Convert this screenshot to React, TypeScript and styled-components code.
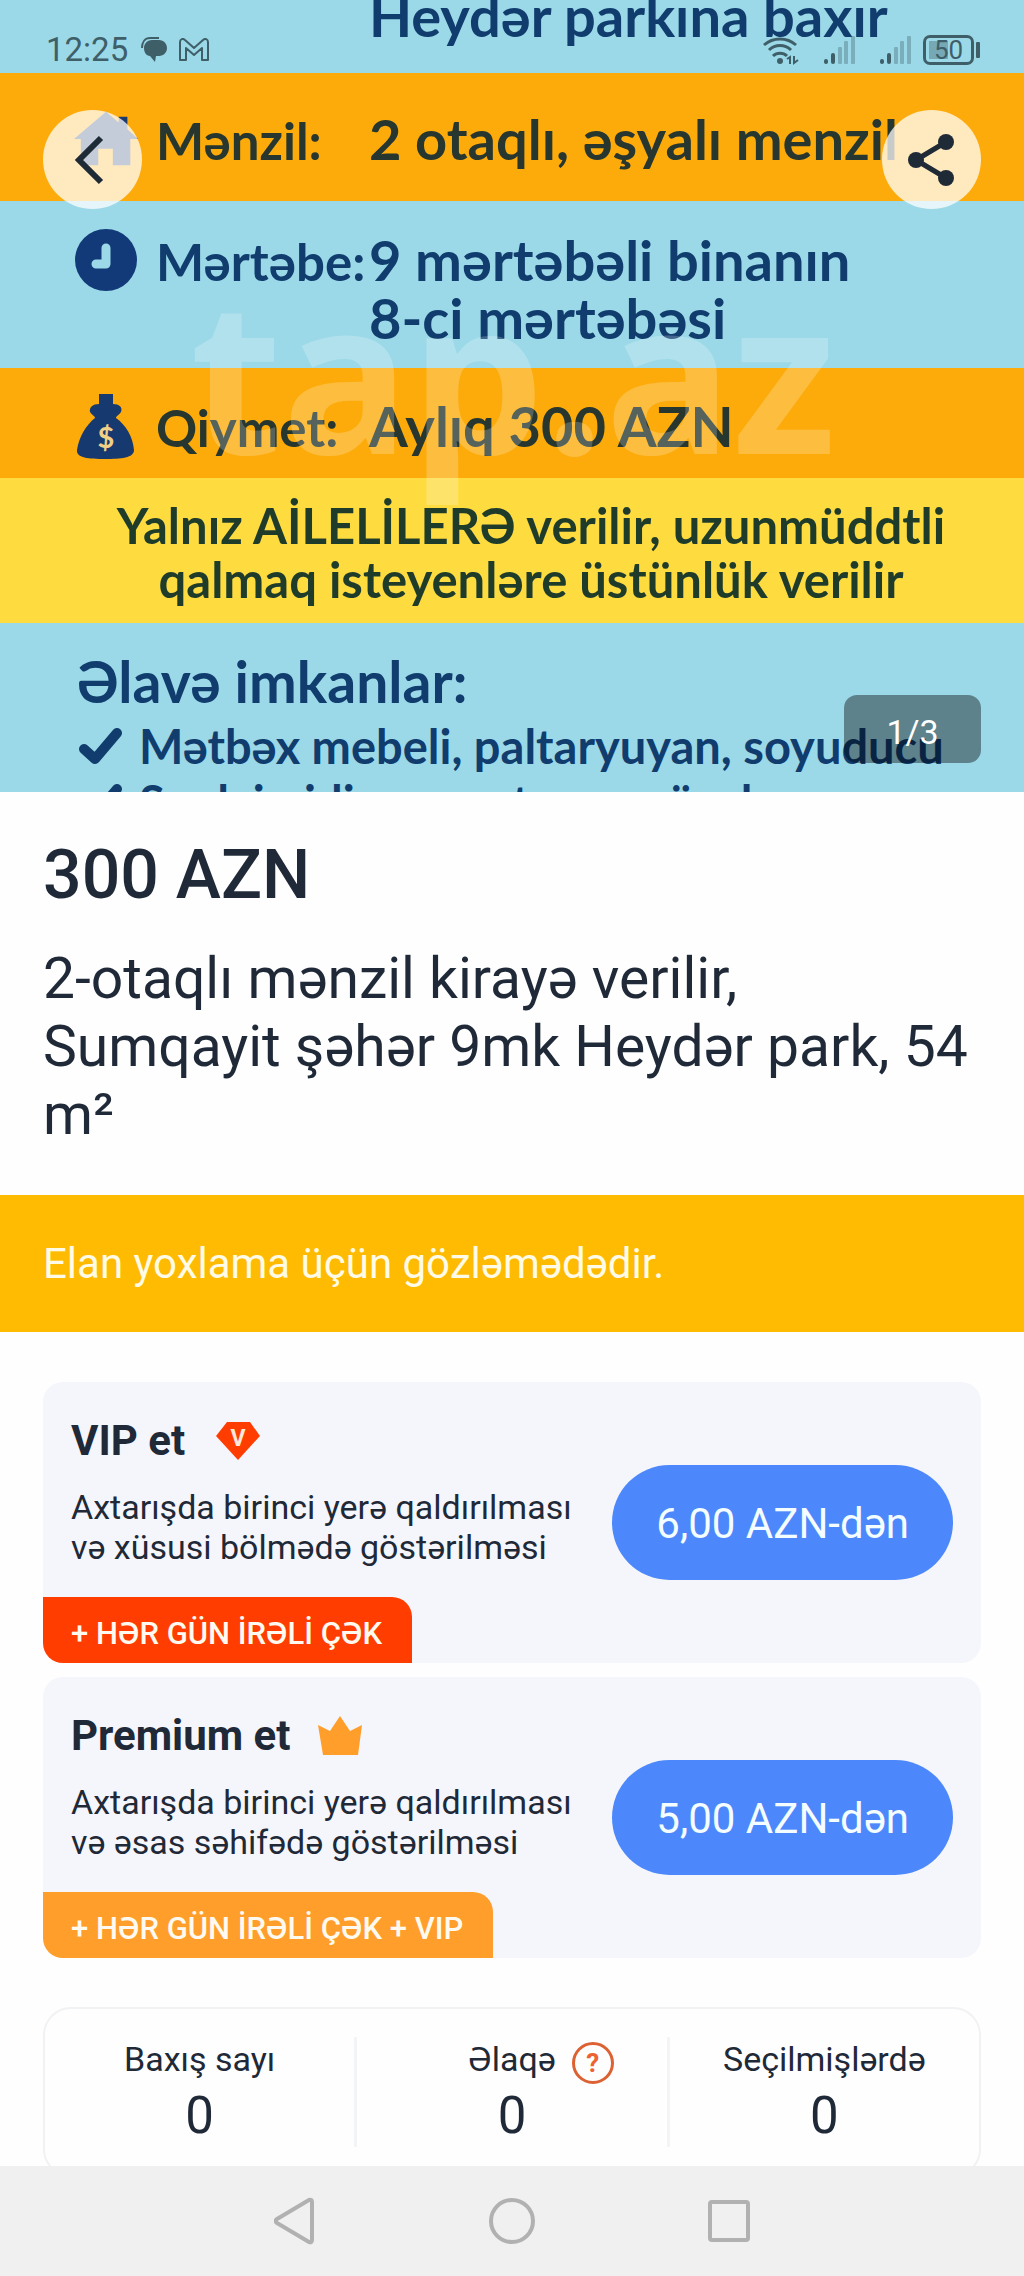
import React from "react";
import styled, { createGlobalStyle } from "styled-components";

const ink = "#1f2937";
const statusInk = "#3f5f68";
const navy = "#103d6e";

const GlobalStyle = createGlobalStyle`
  *, *::before, *::after { box-sizing: border-box; }
  body { margin: 0; background: #fefefe; color: ${ink}; font-family: Roboto, sans-serif; }
  h1, h2, p, dl, dt, dd, ul { margin: 0; padding: 0; }
  button { border: 0; padding: 0; font: inherit; color: inherit; background: none; cursor: pointer; }
`;

const Screen = styled.div`
  display: flex;
  flex-direction: column;
  height: 100vh;
`;

const Content = styled.main`
  flex: 1;
  min-height: 0;
  overflow-y: auto;
  scrollbar-width: none;
`;

/* ---------- hero photo ---------- */

const Hero = styled.section`
  position: relative;
  height: 792px;
  overflow: hidden;
`;

const Poster = styled.div`
  display: flex;
  flex-direction: column;
  font-family: Lato, "Open Sans", sans-serif;
  font-weight: 700;
  font-size: 56px;
  line-height: 58px;
  white-space: nowrap;
`;

const tones = {
  sky: { back: "#9bd9e8", text: navy },
  orange: { back: "#fdab0a", text: "#27372f" },
  yellow: { back: "#fedc40", text: "#1f3c2b" },
};

const Band = styled.div<{ $tone: keyof typeof tones; $pad: string }>`
  display: grid;
  grid-template-columns: 82px 213px 1fr;
  align-items: start;
  padding: ${(p) => p.$pad};
  background: ${(p) => tones[p.$tone].back};
  color: ${(p) => tones[p.$tone].text};
`;

const TopBand = styled.div`
  display: flex;
  align-items: flex-end;
  height: 73px;
  padding: 0 0 28px 369px;
  background: ${tones.sky.back};
  color: ${tones.sky.text};
`;

const IconBox = styled.span`
  display: flex;
  align-items: center;
  width: 66px;
  height: 64px;
`;

const BandLabel = styled.span`
  font-size: 51px;
  line-height: 68px;
`;

const BandValue = styled.span`
  line-height: 58px;
  padding-top: 3px;
`;

const Notice = styled.p`
  padding: 20px 0 17px 38px;
  text-align: center;
  font-size: 49px;
  line-height: 54px;
  background: ${tones.yellow.back};
  color: ${tones.yellow.text};
`;

const Extras = styled.div`
  padding: 25px 0 24px 77px;
  background: ${tones.sky.back};
  color: ${tones.sky.text};
`;

const ExtrasTitle = styled.p`
  font-size: 57px;
  line-height: 66px;
`;

const ExtrasList = styled.ul`
  list-style: none;
  padding-top: 4px;
  font-size: 47px;
  line-height: 56px;
`;

const ExtrasItem = styled.li`
  display: flex;
  align-items: center;
  gap: 14px;
`;

const Watermark = styled.span`
  position: absolute;
  left: 190px;
  top: 266px;
  font: 700 212px/212px "Open Sans", sans-serif;
  color: rgba(255, 255, 255, 0.22);
  pointer-events: none;
`;

const StatusBar = styled.div`
  position: absolute;
  inset: 0 0 auto 0;
  display: flex;
  align-items: center;
  padding: 31px 44px 0 46px;
  color: ${statusInk};
  font-size: 33px;
  line-height: 38px;
`;

const StatusIcons = styled.div`
  display: flex;
  align-items: center;
  gap: 12px;
  margin-left: 13px;
`;

const StatusRight = styled(StatusIcons)`
  gap: 25px;
  margin-left: auto;
`;

const SignalPair = styled.div`
  display: flex;
  align-items: center;
  gap: 12px;
`;

const Battery = styled.span`
  display: flex;
  align-items: center;
  gap: 2px;
`;

const BatteryBody = styled.span`
  display: flex;
  align-items: center;
  justify-content: center;
  width: 51px;
  height: 30px;
  border: 3px solid ${statusInk};
  border-radius: 7px;
  font-size: 26px;
  line-height: 24px;
  background: linear-gradient(rgba(63, 95, 104, 0.4), rgba(63, 95, 104, 0.4)) 3px center / 19px 18px no-repeat;
`;

const BatteryTip = styled.span`
  width: 4px;
  height: 16px;
  border-radius: 1px;
  background: ${statusInk};
`;

const HeroActions = styled.div`
  position: absolute;
  inset: 110px 43px auto 43px;
  display: flex;
  justify-content: space-between;
`;

const RoundButton = styled.button`
  display: flex;
  align-items: center;
  justify-content: center;
  width: 99px;
  height: 99px;
  border-radius: 50%;
  background: rgba(255, 255, 255, 0.74);
`;

const PhotoCounter = styled.span`
  position: absolute;
  right: 43px;
  bottom: 29px;
  padding: 17px 42px 11px;
  min-width: 137px;
  border-radius: 13px;
  background: rgba(0, 0, 0, 0.4);
  color: #fff;
  font-size: 34px;
  line-height: 40px;
  text-align: center;
`;

/* ---------- listing ---------- */

const Summary = styled.section`
  padding: 43px 43px 46px;
`;

const Price = styled.p`
  font-size: 68px;
  line-height: 80px;
  font-weight: 500;
`;

const Title = styled.h1`
  margin-top: 30px;
  font-size: 57px;
  line-height: 68px;
  font-weight: 400;
`;

const ReviewBanner = styled.p`
  padding: 43px;
  background: #ffba02;
  color: #fffbe6;
  font-size: 42px;
  line-height: 51px;
`;

const Promotions = styled.section`
  display: flex;
  flex-direction: column;
  gap: 14px;
  padding: 50px 43px 0;
`;

const PromoCard = styled.article`
  display: flex;
  align-items: center;
  gap: 28px;
  padding-right: 28px;
  border-radius: 20px;
  overflow: hidden;
  background: #f5f6fb;
`;

const PromoBody = styled.div`
  flex: 1;
  padding-top: 33px;
`;

const PromoTitle = styled.h2`
  display: flex;
  align-items: center;
  gap: 28px;
  padding-left: 28px;
  font-size: 42px;
  line-height: 52px;
  font-weight: 700;
`;

const PromoText = styled.p`
  margin: 20px 0 30px;
  padding-left: 28px;
  font-size: 34px;
  line-height: 40px;
`;

const Ribbon = styled.p<{ $color: string }>`
  width: fit-content;
  padding: 16px 30px 8px 28px;
  border-top-right-radius: 20px;
  background: ${(p) => p.$color};
  color: #fffaf0;
  font-size: 31px;
  line-height: 42px;
  font-weight: 500;
`;

const PriceButton = styled.button`
  height: 115px;
  padding: 2px 44px 0;
  border-radius: 58px;
  background: #4c88fb;
  color: #f4fdff;
  font-size: 42px;
  line-height: 51px;
  white-space: nowrap;
`;

const Stats = styled.dl`
  display: flex;
  margin: 49px 43px 0;
  padding: 28px 0;
  border: 2px solid #f1f2f4;
  border-radius: 28px;
`;

const Stat = styled.div`
  flex: 1;
  display: flex;
  flex-direction: column;
  align-items: center;
  gap: 4px;
  & + & { border-left: 3px solid #f3f4f6; }
`;

const StatLabel = styled.dt`
  display: flex;
  align-items: flex-start;
  height: 44px;
  font-size: 34px;
  line-height: 44px;
`;

const StatValue = styled.dd`
  font-size: 51px;
  line-height: 62px;
`;

const HelpButton = styled.button`
  width: 42px;
  height: 42px;
  margin: 5px -58px 0 16px;
  border: 3px solid #dd6233;
  border-radius: 50%;
  color: #ec6232;
  font-size: 26px;
  line-height: 36px;
  font-weight: 700;
`;

const NavBar = styled.nav`
  display: flex;
  justify-content: center;
  align-items: center;
  gap: 121px;
  height: 110px;
  background: #f0f0f0;
`;

const NavButton = styled.button`
  display: flex;
  align-items: center;
  justify-content: center;
  width: 96px;
  height: 96px;
`;

/* ---------- icons ---------- */

const HouseIcon = () => (
  <svg width="68" height="56" viewBox="0 0 68 56" fill="#1c3a6c">
    <path d="M33 0 0 28h7v27h18V38h15v17h18V28h8L55 18V5h-9v6Z" />
  </svg>
);

const ClockIcon = () => (
  <svg width="64" height="64" viewBox="0 0 64 64">
    <circle cx="32" cy="32" r="31" fill="#123a78" />
    <path d="M32 20v16H22" fill="none" stroke="#9bd9e8" strokeWidth="9" strokeLinecap="round" strokeLinejoin="round" />
  </svg>
);

const MoneyBagIcon = () => (
  <svg width="64" height="68" viewBox="0 0 64 68">
    <path
      d="M25 2h14v10c6 0 10 3 8 8-2 3-5 4-5 6 10 7 17 19 18 32 0 8-13 9-29 9S2 66 3 58c2-13 9-25 18-32 0-2-3-3-5-6-1-5 3-8 9-8Z"
      fill="#16396f"
    />
    <text x="32" y="56" textAnchor="middle" fontFamily="Lato, sans-serif" fontSize="29" fontWeight="700" fill="#f0cf86">$</text>
  </svg>
);

const CheckIcon = () => (
  <svg width="48" height="38" viewBox="0 0 48 38" fill="none" stroke={navy} strokeWidth="10" strokeLinecap="round" strokeLinejoin="round">
    <path d="M7 22 18 32 40 6" />
  </svg>
);

const MessageIcon = () => (
  <svg width="26" height="26" viewBox="0 0 26 26">
    <path d="M11 3h7c5 0 8 4 8 8s-3 8-8 8h-3l-1 6-5-6C5 19 3 15 3 11s3-8 8-8Z" fill={statusInk} />
    <path d="M1 11C1 5 4 1 9 1h9" fill="none" stroke={statusInk} strokeWidth="2" />
  </svg>
);

const MailIcon = () => (
  <svg width="30" height="24" viewBox="0 0 30 24" fill="none" stroke={statusInk} strokeWidth="2" strokeLinejoin="round">
    <path d="M1 22V4c0-3 3-4 5-2l9 8 9-8c2-2 5-1 5 2v18h-6V10l-8 7-8-7v12Z" />
  </svg>
);

const WifiIcon = () => (
  <svg width="36" height="30" viewBox="0 0 36 30" fill="none" stroke={statusInk} strokeWidth="3">
    <path d="M1 10a24 24 0 0 1 32 0M6 15a16 16 0 0 1 22 0M10 21a10 10 0 0 1 14 0" />
    <circle cx="17" cy="26" r="3" fill={statusInk} stroke="none" />
    <path d="m24 24 3-2v7M31 21v7l4-3" strokeWidth="2" />
  </svg>
);

const SignalIcon = () => (
  <svg width="31" height="30" viewBox="0 0 31 30" fill={statusInk}>
    <rect x="0" y="24" width="4" height="5" rx="2" />
    <rect x="7" y="18" width="4" height="11" rx="2" />
    <g opacity="0.35">
      <rect x="14" y="12" width="4" height="17" rx="1" />
      <rect x="20" y="6" width="4" height="23" rx="1" />
      <rect x="27" y="1" width="4" height="28" rx="1" />
    </g>
  </svg>
);

const BackIcon = () => (
  <svg width="50" height="50" viewBox="0 0 50 50" fill="none" stroke="#1f2a37" strokeWidth="6">
    <path d="M33 3 11 25l22 22" />
  </svg>
);

const ShareIcon = () => (
  <svg width="50" height="52" viewBox="0 0 50 52" fill="#1f2a37">
    <path d="M9 26 39 8M9 26l30 18" stroke="#1f2a37" strokeWidth="5" />
    <circle cx="9" cy="26" r="8" />
    <circle cx="39" cy="8" r="8" />
    <circle cx="39" cy="44" r="8" />
  </svg>
);

const VipIcon = () => (
  <svg width="50" height="40" viewBox="0 0 50 40">
    <path d="M14 1h23l10 14-22 24L3 15Z" fill="#ff3d00" />
    <text x="25" y="25" textAnchor="middle" fontFamily="Roboto, sans-serif" fontSize="23" fontWeight="700" fill="#ffe9dc">V</text>
  </svg>
);

const CrownIcon = () => (
  <svg width="44" height="40" viewBox="0 0 44 40">
    <path d="m0 9 12 6L22 0l10 15 12-6-4 30H5Z" fill="#ff9e2b" />
  </svg>
);

const navStroke = { fill: "none", stroke: "#b1b1b1", strokeWidth: 4, strokeLinejoin: "round" as const };

const NavBackIcon = () => (
  <svg width="42" height="48" viewBox="0 0 42 48" {...navStroke}>
    <path d="M35 3Q38 2 38 5v38q0 3-3 2L3 26q-3-2 0-4Z" />
  </svg>
);

const NavHomeIcon = () => (
  <svg width="46" height="46" viewBox="0 0 46 46" {...navStroke}>
    <circle cx="23" cy="23" r="21" />
  </svg>
);

const NavRecentIcon = () => (
  <svg width="42" height="42" viewBox="0 0 42 42" {...navStroke}>
    <rect x="2" y="2" width="38" height="38" rx="2" />
  </svg>
);

/* ---------- page ---------- */

const promotions = [
  {
    name: "VIP et",
    icon: <VipIcon />,
    text: "Axtarışda birinci yerə qaldırılması və xüsusi bölmədə göstərilməsi",
    ribbon: "+ HƏR GÜN İRƏLİ ÇƏK",
    color: "#ff3d00",
    price: "6,00 AZN-dən",
  },
  {
    name: "Premium et",
    icon: <CrownIcon />,
    text: "Axtarışda birinci yerə qaldırılması və əsas səhifədə göstərilməsi",
    ribbon: "+ HƏR GÜN İRƏLİ ÇƏK + VIP",
    color: "#ff9e2b",
    price: "5,00 AZN-dən",
  },
];

const stats = [
  { label: "Baxış sayı", value: 0 },
  { label: "Əlaqə", value: 0, help: true },
  { label: "Seçilmişlərdə", value: 0 },
];

export default function App() {
  return (
    <>
      <GlobalStyle />
      <Screen>
        <Content>
          <Hero>
            <Poster>
              <TopBand>Heydər parkına baxır</TopBand>
              <Band $tone="orange" $pad="34px 0 26px 74px">
                <IconBox><HouseIcon /></IconBox>
                <BandLabel>Mənzil:</BandLabel>
                <BandValue>2 otaqlı, əşyalı menzil</BandValue>
              </Band>
              <Band $tone="sky" $pad="27px 0 21px 74px">
                <IconBox><ClockIcon /></IconBox>
                <BandLabel>Mərtəbe:</BandLabel>
                <BandValue>9 mərtəbəli binanın<br />8-ci mərtəbəsi</BandValue>
              </Band>
              <Band $tone="orange" $pad="26px 0 16px 74px">
                <IconBox><MoneyBagIcon /></IconBox>
                <BandLabel>Qiymet:</BandLabel>
                <BandValue>Aylıq 300 AZN</BandValue>
              </Band>
              <Notice>
                Yalnız AİLELİLERƏ verilir, uzunmüddtli
                <br />
                qalmaq isteyenləre üstünlük verilir
              </Notice>
              <Extras>
                <ExtrasTitle>Əlavə imkanlar:</ExtrasTitle>
                <ExtrasList>
                  <ExtrasItem><CheckIcon />Mətbəx mebeli, paltaryuyan, soyuducu</ExtrasItem>
                  <ExtrasItem><CheckIcon />Su daimidir, ev və tamam özəl</ExtrasItem>
                </ExtrasList>
              </Extras>
            </Poster>
            <Watermark>tap.az</Watermark>
            <StatusBar>
              12:25
              <StatusIcons>
                <MessageIcon />
                <MailIcon />
              </StatusIcons>
              <StatusRight>
                <WifiIcon />
                <SignalIcon />
                <SignalPair>
                  <SignalIcon />
                  <Battery>
                    <BatteryBody>50</BatteryBody>
                    <BatteryTip />
                  </Battery>
                </SignalPair>
              </StatusRight>
            </StatusBar>
            <HeroActions>
              <RoundButton aria-label="Geri"><BackIcon /></RoundButton>
              <RoundButton aria-label="Paylaş"><ShareIcon /></RoundButton>
            </HeroActions>
            <PhotoCounter>1/3</PhotoCounter>
          </Hero>

          <Summary>
            <Price>300 AZN</Price>
            <Title>2-otaqlı mənzil kirayə verilir, Sumqayit şəhər 9mk Heydər park, 54 m²</Title>
          </Summary>

          <ReviewBanner>Elan yoxlama üçün gözləmədədir.</ReviewBanner>

          <Promotions>
            {promotions.map((p) => (
              <PromoCard key={p.name}>
                <PromoBody>
                  <PromoTitle>{p.name}{p.icon}</PromoTitle>
                  <PromoText>{p.text}</PromoText>
                  <Ribbon $color={p.color}>{p.ribbon}</Ribbon>
                </PromoBody>
                <PriceButton>{p.price}</PriceButton>
              </PromoCard>
            ))}
          </Promotions>

          <Stats>
            {stats.map((s) => (
              <Stat key={s.label}>
                <StatLabel>
                  {s.label}
                  {s.help && <HelpButton aria-label="Kömək">?</HelpButton>}
                </StatLabel>
                <StatValue>{s.value}</StatValue>
              </Stat>
            ))}
          </Stats>
        </Content>

        <NavBar>
          <NavButton aria-label="Geri"><NavBackIcon /></NavButton>
          <NavButton aria-label="Əsas ekran"><NavHomeIcon /></NavButton>
          <NavButton aria-label="Son tətbiqlər"><NavRecentIcon /></NavButton>
        </NavBar>
      </Screen>
    </>
  );
}
